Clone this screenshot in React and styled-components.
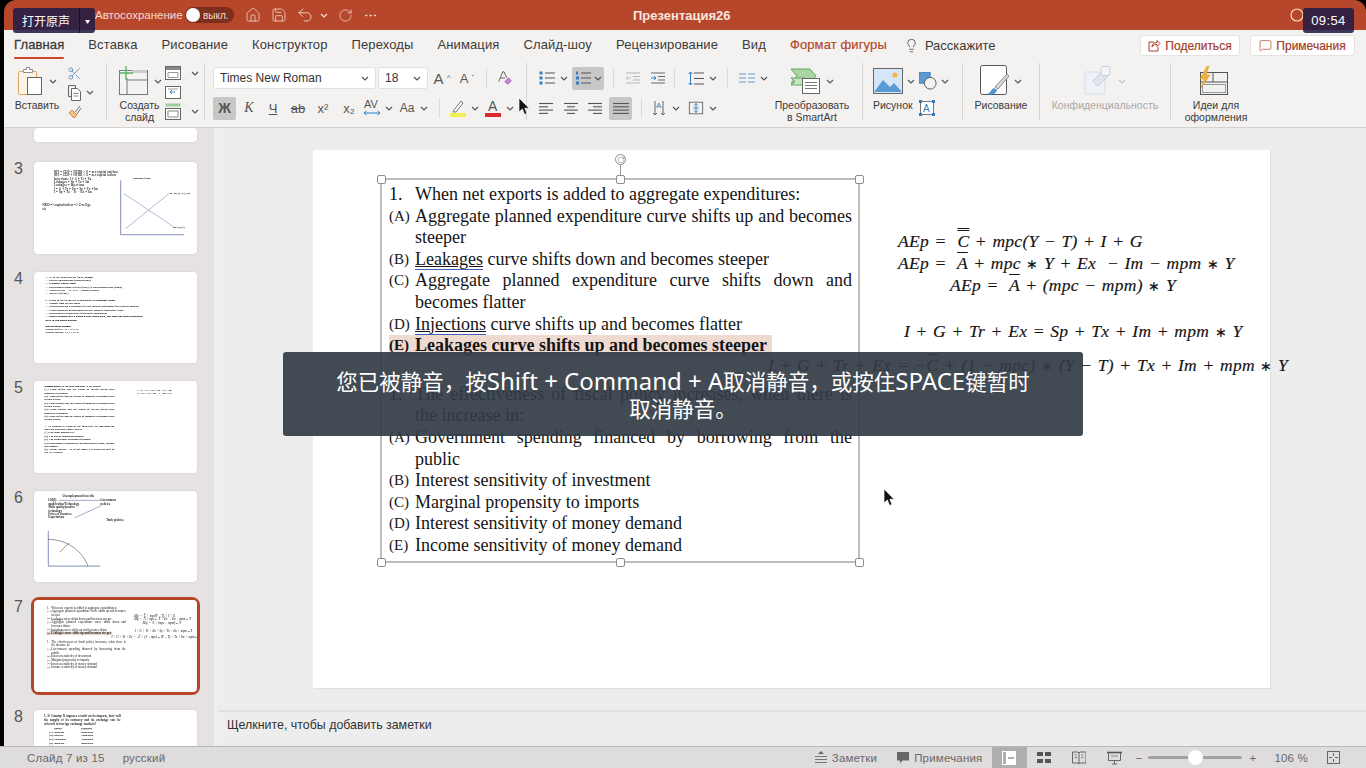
import React from 'react'
import styled, { createGlobalStyle } from 'styled-components'
import { House, Save, Undo2, RotateCw, Ellipsis, Scissors, Lightbulb, MessageSquare } from 'lucide-react'

const GlobalStyle = createGlobalStyle`
  html, body {
    margin: 0;
    padding: 0;
    background: #000;
    overflow: hidden;
  }
  * { box-sizing: border-box; }
`

const SANS = `"Liberation Sans", Arial, sans-serif`
const SERIF = `"Liberation Serif", "Times New Roman", serif`

const Page = styled.div`
  position: relative;
  width: 1366px;
  height: 768px;
  overflow: hidden;
  background: #000;
  font-family: ${SANS};
  display: flex;
  flex-direction: column;
`

const Window = styled.div`
  margin-left: 4px;
  flex: 1;
  min-height: 0;
  display: flex;
  flex-direction: column;
`

/* title bar */
const TitleBar = styled.div`
  height: 30px;
  flex: none;
  background: #b7472a;
  border-radius: 12px 12px 0 0;
  display: grid;
  grid-template-columns: 538px auto 1fr;
  align-items: center;
  padding-left: 91px;
  color: #fff;
`

const QuickBar = styled.div`
  display: flex;
  align-items: center;
`

const AutoSave = styled.span`
  font-size: 11.5px;
  color: #f3dcd4;
  width: 90px;
`

const Toggle = styled.div`
  width: 49px;
  height: 16px;
  border-radius: 8px;
  background: #7c2f1c;
  display: flex;
  align-items: center;
  gap: 3px;
  font-size: 10px;
  color: #f3dcd4;
  padding-left: 1px;
  margin-right: 6px;
  &::before {
    content: '';
    width: 14px;
    height: 14px;
    border-radius: 50%;
    background: #fff;
  }
`

const QuickIcon = styled.span`
  display: inline-flex;
  width: ${p => p.$w || 26}px;
  justify-content: center;
  color: #f6e3dc;
`

const DocTitle = styled.div`
  font-size: 13px;
  font-weight: 700;
  color: #f7e6e0;
`

const TitleRight = styled.div`
  display: flex;
  justify-content: flex-end;
  padding-right: 62px;
`

/* tabs */
const TabRow = styled.div`
  height: 30px;
  flex: none;
  background: #f4f2f1;
  display: flex;
  align-items: center;
  padding: 0 11px 0 10px;
  gap: 24px;
`

const Tab = styled.div`
  position: relative;
  font-size: 13px;
  letter-spacing: 0.12px;
  line-height: 28px;
  color: ${p => (p.$accent ? '#b7472a' : '#3c3a39')};
  ${p => p.$accent && '-webkit-text-stroke: 0.2px #b7472a;'}
  ${p => p.$active && `
    -webkit-text-stroke: 0.3px #3c3a39;
    &::after {
      content: '';
      position: absolute;
      left: 0;
      right: 0;
      bottom: 0;
      height: 2px;
      border-radius: 1px;
      background: #c8492a;
    }
  `}
`

const TellMe = styled.div`
  display: flex;
  align-items: center;
  gap: 6px;
  margin-left: -7px;
  font-size: 13px;
  color: #3c3a39;
`

const HeaderButtons = styled.div`
  margin-left: auto;
  display: flex;
  gap: 10px;
  margin-top: 1px;
`

const HeaderButton = styled.div`
  width: ${p => p.$w}px;
  height: 21px;
  background: #fff;
  border: 1px solid #e5e2e1;
  border-radius: 3px;
  display: flex;
  align-items: center;
  justify-content: center;
  gap: 4px;
  font-size: 12px;
  color: #a63c26;
  -webkit-text-stroke: 0.2px #a63c26;
`

/* ribbon */
const Ribbon = styled.div`
  height: 68px;
  flex: none;
  background: #f4f2f1;
  border-bottom: 1px solid #d4d2d1;
  padding: 3px 0 7px 10px;
  display: flex;
  color: #444;
`

const Group = styled.div`
  width: ${p => p.$w}px;
  flex: none;
  padding-left: ${p => p.$pl || 0}px;
  display: flex;
`

const GroupSep = styled.div`
  width: 1px;
  flex: none;
  background: #d6d4d3;
`

const Rows = styled.div`
  display: flex;
  flex-direction: column;
  width: ${p => (p.$w ? `${p.$w}px` : 'auto')};
`

const ToolRow = styled.div`
  height: 30px;
  flex: none;
  display: flex;
  align-items: center;
`

const Tool = styled.div`
  width: ${p => p.$w || 16}px;
  height: ${p => (p.$active ? 23 : 20)}px;
  flex: none;
  display: flex;
  align-items: center;
  justify-content: center;
  gap: 3px;
  border-radius: 2px;
  background: ${p => (p.$active ? '#c9c7c6' : 'transparent')};
  font-size: ${p => p.$fs || 13}px;
  font-weight: ${p => p.$bold || 400};
  font-style: ${p => (p.$italic ? 'italic' : 'normal')};
  text-decoration: ${p => p.$deco || 'none'};
  font-family: ${p => (p.$serif ? SERIF : SANS)};
  color: #555;
`

const Caret = styled.sup`
  font-size: 8px;
  line-height: 0;
`

const Gap = styled.div`
  width: ${p => p.$w}px;
  flex: none;
`

const MiniSep = styled.div`
  width: 1px;
  height: 20px;
  flex: none;
  background: #dcdad9;
`

const Select = styled.div`
  width: ${p => p.$w}px;
  height: 22px;
  flex: none;
  background: #fff;
  border: 1px solid #e1dfde;
  border-radius: 3px;
  padding: 0 6px;
  display: flex;
  align-items: center;
  justify-content: space-between;
  font-size: 12px;
  color: #333;
`

const BigTool = styled.div`
  width: ${p => p.$w}px;
  flex: none;
  display: flex;
  flex-direction: column;
  align-items: center;
`

const BigIcon = styled.div`
  height: 36px;
  flex: none;
  display: flex;
  align-items: center;
  gap: 4px;
`

const ToolLabel = styled.div`
  font-size: 10.5px;
  line-height: 12px;
  text-align: center;
  color: ${p => (p.$disabled ? '#a9a8a7' : '#3a3a3a')};
  white-space: nowrap;
`

const SmallColumn = styled.div`
  display: flex;
  flex: none;
  flex-direction: column;
  align-items: flex-start;
  justify-content: space-between;
  height: 57px;
  padding-top: 3px;
`

const SmallTool = styled.div`
  display: flex;
  align-items: center;
  gap: 4px;
`

const PictureLabelRow = styled.div`
  display: flex;
  align-items: flex-start;
  gap: 6px;
  & > svg {
    margin-top: 1px;
  }
`

/* main */
const Main = styled.div`
  flex: 1;
  min-height: 0;
  display: flex;
`

const Sidebar = styled.div`
  width: 214px;
  flex: none;
  background: #e6e2e2;
  border-right: 4px solid #f0eeee;
  overflow: hidden;
  display: flex;
  flex-direction: column;
  gap: 18px;
`

const ThumbRow = styled.div`
  display: flex;
  flex: none;
  height: ${p => (p.$clip ? '14px' : 'auto')};
  margin-bottom: ${p => (p.$clip ? '2px' : '0')};
`

const ThumbNum = styled.div`
  width: 30px;
  flex: none;
  padding: 0 0 0 10px;
  font-size: 16px;
  line-height: 13px;
  color: #555;
`

const ThumbCard = styled.div`
  position: relative;
  width: 163px;
  height: ${p => (p.$clip ? '14px' : '91.5px')};
  background: #fff;
  border-radius: 4px;
  overflow: hidden;
  flex: none;
  box-shadow: 0 0 2px rgba(0, 0, 0, 0.12);
`

const ThumbFrame = styled.div`
  position: relative;
  border-radius: 5px;
  ${p => p.$selected && 'outline: 3px solid #b7472a; outline-offset: 0;'}
`

const ThumbScale = styled.div`
  position: absolute;
  left: 0;
  top: 0;
  width: 957px;
  height: 538px;
  transform: scale(0.1703);
  transform-origin: 0 0;
  filter: blur(1.3px);
`

const ThumbText = styled.div`
  position: absolute;
  left: ${p => p.$x}px;
  top: ${p => p.$y}px;
  width: ${p => (p.$w ? `${p.$w}px` : 'auto')};
  font-family: ${SERIF};
  font-size: ${p => p.$fs || 17}px;
  line-height: ${p => p.$lh || 19}px;
  letter-spacing: ${p => p.$ls || 0}px;
  color: #000;
  -webkit-text-stroke: 0.3px #000;
  white-space: ${p => (p.$w ? 'normal' : 'nowrap')};
  text-align: ${p => (p.$w ? 'justify' : 'left')};
`

const ThumbChart = styled.svg`
  position: absolute;
  left: 0;
  top: 0;
`

const Workspace = styled.div`
  flex: 1;
  min-width: 0;
  display: flex;
  flex-direction: column;
  background: #eeeded;
`

const SlideArea = styled.div`
  flex: 1;
  min-height: 0;
  padding: 22px 0 0 95px;
`

const SlideSheet = styled.div`
  position: relative;
  width: 957px;
  height: 538px;
  background: #fff;
  box-shadow: 1px 1px 1px rgba(0, 0, 0, 0.06);
`

const QuestionBox = styled.div`
  position: absolute;
  left: 68px;
  top: 29px;
  width: 478px;
  height: 383px;
  padding: 5px 7px 0 8px;
  font-family: ${SERIF};
  font-size: 18px;
  line-height: 21.6px;
  color: #141414;
  ${p => p.$selected && 'outline: 2px solid #bdbdbd; outline-offset: -1px;'}
`

const Item = styled.div`
  display: grid;
  grid-template-columns: 26px 1fr;
  text-align: justify;
  margin-top: ${p => p.$mt || 0}px;
  ${p => p.$marked && `
    font-weight: 700;
    width: fit-content;
    background: #efdad2;
    padding-right: 5px;
    text-align: left;
  `}
`

const Marker = styled.span`
  font-size: ${p => (p.$num ? 18 : 15)}px;
`

const Flagged = styled.span`
  text-decoration: underline;
  border-bottom: 1px solid #3f5fb5;
`

const Handle = styled.div`
  position: absolute;
  left: ${p => p.$x}%;
  top: ${p => p.$y}%;
  width: 9px;
  height: 9px;
  margin: -4px 0 0 -4px;
  background: #fff;
  border: 1px solid #8d8d8d;
  border-radius: 2px;
`

const RotateHandle = styled.div`
  position: absolute;
  left: 50%;
  top: -25px;
  width: 11px;
  height: 11px;
  margin-left: -5px;
  border: 1px solid #8d8d8d;
  border-radius: 50%;
  background: #fff;
  display: flex;
  align-items: center;
  justify-content: center;
  color: #777;
  &::after {
    content: '';
    position: absolute;
    left: 4px;
    top: 10px;
    width: 1px;
    height: 15px;
    background: #9a9a9a;
  }
`

const Formula = styled.div`
  position: absolute;
  left: ${p => p.$x}px;
  top: ${p => p.$y}px;
  font-family: ${SERIF};
  font-style: italic;
  font-size: 17.5px;
  line-height: 22px;
  word-spacing: 0.8px;
  letter-spacing: 0.28px;
  color: #141414;
  -webkit-text-stroke: 0.15px #141414;
  white-space: pre;
`

const Over = styled.span`
  text-decoration: overline ${p => (p.$double ? 'double' : 'solid')};
  text-decoration-thickness: 1px;
`

const Star = styled.span`
  font-family: "Liberation Sans", sans-serif;
  font-style: normal;
  font-size: 14px;
`

const NotesPane = styled.div`
  height: 36px;
  flex: none;
  border-top: 2px solid #e2e0e0;
  padding: 0 0 8px 9px;
  display: flex;
  align-items: center;
  font-size: 12.4px;
  color: #333;
`

/* status bar */
const StatusBar = styled.div`
  height: 22px;
  flex: none;
  background: #dedcdc;
  border-top: 1px solid #b8b6b6;
  display: flex;
  align-items: center;
  padding-left: 27px;
  font-size: 11.5px;
  letter-spacing: 0.2px;
  color: #6a6868;
`

const StatusRight = styled.div`
  margin-left: auto;
  display: flex;
  align-items: center;
  height: 100%;
  padding-right: 26px;
`

const StatusItem = styled.div`
  display: flex;
  align-items: center;
  gap: 5px;
  margin-right: ${p => p.$mr || 0}px;
`

const ViewButton = styled.div`
  width: 35px;
  height: 100%;
  display: flex;
  align-items: center;
  justify-content: center;
  background: ${p => (p.$active ? '#b0aeae' : 'transparent')};
`

const ZoomTrack = styled.div`
  position: relative;
  width: 94px;
  height: 3px;
  margin: 0 7px 0 6px;
  background: #a3a1a1;
  border-radius: 2px;
`

const ZoomThumb = styled.div`
  position: absolute;
  left: 40px;
  top: -6px;
  width: 15px;
  height: 15px;
  border-radius: 50%;
  background: #fff;
`

/* things lying over the recording */
const CaptionButton = styled.div`
  position: absolute;
  left: 13px;
  top: 8px;
  width: 82px;
  height: 25px;
  border-radius: 3px;
  background: rgba(35, 30, 70, 0.88);
  color: #fff;
  display: grid;
  grid-template-columns: 66px 1fr;
  align-items: center;
  text-align: center;
  font-family: "Noto Sans CJK SC", sans-serif;
  font-size: 12px;
`

const CaptionArrow = styled.span`
  height: 100%;
  border-left: 1px solid #15131f;
  display: flex;
  align-items: center;
  justify-content: center;
  font-size: 5px;
`

const TimeBadge = styled.div`
  position: absolute;
  left: 1303px;
  top: 8px;
  width: 51px;
  height: 25px;
  border-radius: 3px;
  background: rgba(35, 30, 70, 0.88);
  color: #fff;
  display: flex;
  align-items: center;
  justify-content: center;
  font-size: 13px;
  letter-spacing: 0.4px;
`

const MuteBanner = styled.div`
  position: absolute;
  left: 283px;
  top: 352px;
  width: 800px;
  height: 84px;
  padding: 0 48px;
  border-radius: 3px;
  background: rgba(50, 59, 69, 0.92);
  color: #fff;
  text-align: center;
  display: flex;
  align-items: center;
  font-family: "Noto Sans CJK SC", sans-serif;
  font-size: 21.5px;
  line-height: 27px;
`

const BannerLatin = styled.span`
  font-family: "Noto Sans", sans-serif;
  font-size: 24px;
  line-height: 20px;
`

const CursorMark = styled.svg`
  position: absolute;
  left: ${p => p.$x}px;
  top: ${p => p.$y}px;
`

const Chev = ({ c = '#555' }) => (
  <svg width="8" height="5" viewBox="0 0 8 5" fill="none">
    <path d="M1 1l3 3 3-3" stroke={c} strokeWidth="1.2" />
  </svg>
)

const Cursor = ({ x, y }) => (
  <CursorMark $x={x} $y={y} width="12" height="19" viewBox="0 0 12 19">
    <path d="M1 1v14l3.4-3 2.2 5.4 2.4-1-2.2-5.2h4.4z" fill="#111" stroke="#fff" strokeWidth="0.7" />
  </CursorMark>
)

const PasteIcon = () => (
  <svg width="28" height="30" viewBox="0 0 28 30" fill="none">
    <rect x="1.5" y="5.5" width="18" height="23" rx="1" fill="#fbf3e8" stroke="#dda45c" />
    <path d="M6.5 5.5V3.5h3V1.5h3v2h3v3h-9z" fill="#fff" stroke="#8d8d8d" />
    <rect x="10.5" y="11.5" width="14" height="17" fill="#fff" stroke="#666" />
  </svg>
)

const CopyIcon = () => (
  <svg width="15" height="18" viewBox="0 0 15 18" fill="none">
    <path d="M1.5 1.5h7v3M1.5 1.5v11h3" stroke="#666" />
    <path d="M4.5 4.5h6l3 3v9h-9z" fill="#fff" stroke="#666" />
    <path d="M6.5 9.5h5M6.5 12h5" stroke="#888" />
  </svg>
)

const BrushIcon = () => (
  <svg width="16" height="16" viewBox="0 0 16 16" fill="none">
    <path d="M2 9l5 5 3-3-5-5z" fill="#f3c48c" stroke="#d9803a" />
    <path d="M8 8l5-6M10 10l4-6" stroke="#777" />
  </svg>
)

const NewSlideIcon = () => (
  <svg width="32" height="30" viewBox="0 0 32 30" fill="none">
    <rect x="1.5" y="4.5" width="28" height="24" fill="#f3f3f2" stroke="#777" />
    <path d="M9 12v16M9 14h20" stroke="#777" />
    <rect x="14" y="4" width="15" height="3" fill="#ccc" />
    <path d="M8 0v14M1 7h14" stroke="#5cb36a" strokeWidth="1.4" />
  </svg>
)

const LayoutIcon = ({ bar = '#888' }) => (
  <svg width="16" height="14" viewBox="0 0 16 14" fill="none">
    <rect x="0.5" y="0.5" width="15" height="13" fill="#fff" stroke="#666" />
    <rect x="1" y="1" width="14" height="3" fill={bar} />
    <path d="M3 6.5h10v5H3z" stroke="#999" />
  </svg>
)

const ResetIcon = () => (
  <svg width="16" height="15" viewBox="0 0 16 15" fill="none">
    <rect x="0.5" y="2.5" width="15" height="12" fill="#fff" stroke="#666" />
    <path d="M10 8H5l2-2M5 8l2 2" stroke="#3f8bc9" />
    <path d="M3 5h10" stroke="#999" />
  </svg>
)

const SectionIcon = () => (
  <svg width="16" height="17" viewBox="0 0 16 17" fill="none">
    <rect x="0.5" y="0.5" width="15" height="3" fill="#9ccf9f" />
    <rect x="0.5" y="5.5" width="15" height="11" fill="#fff" stroke="#666" />
    <rect x="3" y="8" width="10" height="6" stroke="#888" />
  </svg>
)

const ClearFormatIcon = () => (
  <svg width="18" height="18" viewBox="0 0 18 18" fill="none">
    <path d="M2 13L6.5 2h1.4L11 9M4 9h5" stroke="#555" />
    <path d="M9 13l4-4 3 3-4 4z" fill="#c58ad6" stroke="#9a4fb0" />
  </svg>
)

const KerningIcon = () => (
  <svg width="20" height="20" viewBox="0 0 20 20" fill="none">
    <text x="2" y="10" fontSize="11" fill="#555" fontFamily="Liberation Sans">AV</text>
    <path d="M2 15h16M4.500 13l-2.500 2 2.500 2M15.500 13l2.500 2-2.500 2" stroke="#2f7cc4" />
  </svg>
)

const ListIcon = ({ numbered }) => (
  <svg width="16" height="14" viewBox="0 0 16 14" fill="none">
    <path d="M6 2h10M6 7h10M6 12h10" stroke="#555" strokeWidth="1.1" />
    {numbered ? (
      <g fill="#2f7cc4">
        <rect x="1" y="0.5" width="2" height="3" />
        <rect x="1" y="5.5" width="3" height="3" />
        <rect x="1" y="10.5" width="3" height="3" />
      </g>
    ) : (
      <g fill="#2f7cc4">
        <rect x="0.5" y="0.5" width="3" height="3" />
        <rect x="0.5" y="5.5" width="3" height="3" />
        <rect x="0.5" y="10.5" width="3" height="3" />
      </g>
    )}
  </svg>
)

const IndentIcon = ({ dim }) => (
  <svg width="14" height="12" viewBox="0 0 14 12" fill="none">
    <path d="M0 1h14M7 4.5h7M7 8h7M0 11h14" stroke={dim ? '#b5b5b5' : '#666'} />
    <path d={dim ? 'M5 6H0m2-2L0 6l2 2' : 'M0 6h5M3 4l2 2-2 2'} stroke={dim ? '#a8c8e4' : '#2f7cc4'} />
  </svg>
)

const LineSpacingIcon = () => (
  <svg width="16" height="15" viewBox="0 0 16 15" fill="none">
    <path d="M6 2h10M6 7.5h10M6 13h10" stroke="#555" />
    <path d="M2.5 1v13M0.5 3l2-2 2 2M0.5 12l2 2 2-2" stroke="#2f7cc4" />
  </svg>
)

const ColumnsIcon = () => (
  <svg width="16" height="10" viewBox="0 0 16 10" fill="none">
    <path d="M0 1h7M0 5h7M0 9h7M9 1h7M9 5h7M9 9h7" stroke="#5b9bd5" strokeWidth="1.2" />
  </svg>
)

const AlignIcon = ({ mode }) => {
  const rows = {
    left: [[0, 14], [0, 9], [0, 14], [0, 9]],
    center: [[0, 14], [3, 11], [0, 14], [3, 11]],
    right: [[0, 14], [5, 14], [0, 14], [5, 14]],
    justify: [[0, 16], [0, 16], [0, 16], [0, 16]],
  }[mode]
  return (
    <svg width="16" height="13" viewBox="0 0 16 13" fill="none">
      {rows.map((r, i) => (
        <path key={i} d={`M${r[0]} ${1.5 + i * 3.3}H${r[1]}`} stroke="#555" strokeWidth="1.1" />
      ))}
    </svg>
  )
}

const TextDirIcon = () => (
  <svg width="14" height="18" viewBox="0 0 14 18" fill="none">
    <path d="M3 2v14M1 14l2 2 2-2M11 2v14M9 14l2 2 2-2" stroke="#666" />
    <text x="4" y="9" fontSize="8" fill="#2f7cc4" fontFamily="Liberation Sans">A</text>
  </svg>
)

const TextAlignIcon = () => (
  <svg width="18" height="16" viewBox="0 0 18 16" fill="none">
    <rect x="1.5" y="1.5" width="15" height="13" stroke="#666" />
    <path d="M9 3v10M7 5l2-2 2 2M7 11l2 2 2-2M6 8h6" stroke="#2f7cc4" />
  </svg>
)

const SmartArtIcon = () => (
  <svg width="32" height="28" viewBox="0 0 32 28" fill="none">
    <path d="M1 2h19l6 7-6 7H1l6-7z" fill="#a9d5a5" stroke="#5fa85c" />
    <path d="M1 11h14v7H1l4-3.500z" fill="#c6e4c2" stroke="#5fa85c" />
    <rect x="12.5" y="11.5" width="17" height="15" fill="#fff" stroke="#666" />
    <path d="M15 15.500h12M15 18.500h12M15 21.500h12" stroke="#777" />
  </svg>
)

const PictureIcon = () => (
  <svg width="30" height="26" viewBox="0 0 30 26" fill="none">
    <rect x="0.5" y="0.5" width="29" height="25" fill="#d5e7f6" stroke="#666" />
    <path d="M1 24l9-12 7 7 4-4 8 9z" fill="#5b9bd5" />
    <circle cx="22" cy="7" r="2.6" fill="#f2b84b" />
  </svg>
)

const ShapesIcon = () => (
  <svg width="18" height="18" viewBox="0 0 20 20" fill="none">
    <rect x="0.5" y="0.5" width="12" height="12" fill="#5b9bd5" stroke="#4a86c0" />
    <circle cx="12.5" cy="12.5" r="6.5" fill="#f4f2f1" stroke="#555" />
  </svg>
)

const TextBoxIcon = () => (
  <svg width="16" height="16" viewBox="0 0 16 16" fill="none">
    <rect x="1.5" y="1.5" width="13" height="13" fill="#fff" stroke="#777" />
    <text x="4" y="12" fontSize="10" fill="#2f7cc4" fontFamily="Liberation Sans">A</text>
    <g fill="#2f7cc4">
      <rect x="0" y="0" width="3" height="3" />
      <rect x="13" y="0" width="3" height="3" />
      <rect x="0" y="13" width="3" height="3" />
      <rect x="13" y="13" width="3" height="3" />
    </g>
  </svg>
)

const DrawingIcon = () => (
  <svg width="30" height="32" viewBox="0 0 30 32" fill="none">
    <rect x="0.5" y="0.5" width="26" height="29" rx="2" fill="#fff" stroke="#555" />
    <path d="M27 9L15 22l3 2L29 11z" fill="#d9d9d9" stroke="#888" />
    <path d="M14 23c-3 1-3 5-7 6 5 2 10-1 10-4z" fill="#4f93d2" />
  </svg>
)

const PrivacyIcon = () => (
  <svg width="30" height="30" viewBox="0 0 30 30" fill="none">
    <path d="M1 6h14l6 6v16H1z" fill="#eef2f7" stroke="#d5dde6" />
    <path d="M9 15l10-10 5 5-10 10z" fill="#dfe5ec" stroke="#c5ced8" />
    <rect x="17" y="0.5" width="9" height="9" rx="2" fill="#f2f4f7" stroke="#c5ced8" />
  </svg>
)

const IdeasIcon = () => (
  <svg width="38" height="30" viewBox="0 0 38 30" fill="none">
    <rect x="3.5" y="6.5" width="27" height="22" fill="#f4f2f1" stroke="#555" />
    <path d="M16 7v9M4 16h26" stroke="#555" />
    <rect x="5.5" y="18.5" width="23" height="8" stroke="#999" />
    <path d="M10 0L3 13h4L4 22 13 9H9l3-9z" fill="#f2b33d" stroke="#d6932a" strokeWidth="0.5" />
  </svg>
)

const ShareIcon = () => (
  <svg width="13" height="13" viewBox="0 0 13 13" fill="none">
    <path d="M6 3H1v9h9V8" stroke="#a63c26" />
    <path d="M4 8c0-3 2-4.500 5-4.500V1.500l3 3-3 3V5.500C7 5.500 5 6 4 8z" stroke="#a63c26" />
  </svg>
)

const NotesIcon = () => (
  <svg width="12" height="13" viewBox="0 0 12 13" fill="none">
    <path d="M3 3l3-3 3 3z" fill="#666" />
    <path d="M0 5.500h12M0 8.500h12M0 11.500h12" stroke="#777" />
  </svg>
)

const CommentIcon = () => (
  <svg width="12" height="12" viewBox="0 0 12 12">
    <path d="M0 0h12v8.500H5.500L3 11.500v-3H0z" fill="#666" />
  </svg>
)

const NormalViewIcon = () => (
  <svg width="14" height="14" viewBox="0 0 14 14">
    <rect width="14" height="14" fill="#fff" />
    <rect x="1" y="1" width="3" height="12" fill="#b0aeae" />
    <rect x="6" y="6" width="6" height="2" fill="#b0aeae" />
  </svg>
)

const GridViewIcon = () => (
  <svg width="14" height="11" viewBox="0 0 14 11" fill="#555">
    <rect width="6" height="4" />
    <rect x="8" width="6" height="4" />
    <rect y="7" width="6" height="4" />
    <rect x="8" y="7" width="6" height="4" />
  </svg>
)

const ReadViewIcon = () => (
  <svg width="14" height="13" viewBox="0 0 14 13" fill="none">
    <path d="M0.500 1h5.500l1 1 1-1h6v11H8l-1 1-1-1H0.500zM7 2v10" stroke="#666" />
    <path d="M2.500 4h2.500M2.500 6.500h2.500M9 4h2.500M9 6.500h2.500" stroke="#888" />
  </svg>
)

const ShowIcon = () => (
  <svg width="15" height="14" viewBox="0 0 15 14" fill="none">
    <path d="M0 1.500h15" stroke="#555" strokeWidth="1.6" />
    <path d="M1.500 2v7.500h12V2M7.500 9.500V13M5 13h5" stroke="#666" />
    <path d="M4 5h7" stroke="#888" />
  </svg>
)

const FitIcon = () => (
  <svg width="13" height="13" viewBox="0 0 13 13" fill="none">
    <rect x="0.500" y="0.500" width="12" height="12" stroke="#666" />
    <path d="M6.500 2v3M6.500 8v3M2 6.500h3M8 6.500h3" stroke="#666" />
  </svg>
)

const AccentA = ({ color }) => (
  <svg width="18" height="19" viewBox="0 0 18 19" fill="none">
    <text x="4" y="12" fontSize="14" fill="#555" fontFamily="Liberation Sans">A</text>
    <rect x="1" y="14" width="16" height="4" fill={color} />
  </svg>
)

const HighlightIcon = () => (
  <svg width="18" height="19" viewBox="0 0 18 19" fill="none">
    <path d="M5 11l7-9 2 2-7 9-3 0z" fill="#fff" stroke="#777" />
    <rect x="1" y="14" width="16" height="4" fill="#f4ee4e" />
  </svg>
)

const MainSlide = ({ selected }) => (
  <>
    <QuestionBox $selected={selected}>
      <Item><Marker $num>1.</Marker><span>When net exports is added to aggregate expenditures:</span></Item>
      <Item><Marker>(A)</Marker><span>Aggregate planned expenditure curve shifts up and becomes steeper</span></Item>
      <Item><Marker>(B)</Marker><span><Flagged>Leakages</Flagged> curve shifts down and becomes steeper</span></Item>
      <Item><Marker>(C)</Marker><span>Aggregate planned expenditure curve shifts down and becomes flatter</span></Item>
      <Item><Marker>(D)</Marker><span><Flagged>Injections</Flagged> curve shifts up and becomes flatter</span></Item>
      <Item $marked><Marker>(E)</Marker><span>Leakages curve shifts up and becomes steeper</span></Item>
      <Item $mt={27}><Marker $num>1.</Marker><span>The effectiveness of fiscal policy increases, when there is the increase in:</span></Item>
      <Item><Marker>(A)</Marker><span>Government spending financed by borrowing from the public</span></Item>
      <Item><Marker>(B)</Marker><span>Interest sensitivity of investment</span></Item>
      <Item><Marker>(C)</Marker><span>Marginal propensity to imports</span></Item>
      <Item><Marker>(D)</Marker><span>Interest sensitivity of money demand</span></Item>
      <Item><Marker>(E)</Marker><span>Income sensitivity of money demand</span></Item>
      {selected && (
        <>
          <RotateHandle><RotateCw size={8} strokeWidth={1.5} /></RotateHandle>
          {[[0, 0], [50, 0], [100, 0], [0, 100], [50, 100], [100, 100]].map(([x, y]) => (
            <Handle key={`${x}-${y}`} $x={x} $y={y} />
          ))}
        </>
      )}
    </QuestionBox>
    <Formula $x={585} $y={80}>{'AEp =  '}<Over $double>C</Over>{' + mpc(Y − T) + I + G'}</Formula>
    <Formula $x={585} $y={102}>{'AEp =  '}<Over>A</Over>{' + mpc '}<Star>∗</Star>{' Y + Ex  − Im − mpm '}<Star>∗</Star>{' Y'}</Formula>
    <Formula $x={637} $y={124}>{'AEp =  '}<Over>A</Over>{' + (mpc − mpm) '}<Star>∗</Star>{' Y'}</Formula>
    <Formula $x={591} $y={170}>{'I + G + Tr + Ex = Sp + Tx + Im + mpm '}<Star>∗</Star>{' Y'}</Formula>
    <Formula $x={455} $y={204}>{'I + G + Tr + Ex = −'}<Over>C</Over>{' + (1 − mpc) '}<Star>∗</Star>{' (Y − T) + Tx + Im + mpm '}<Star>∗</Star>{' Y'}</Formula>
  </>
)

const Thumb3 = () => (
  <>
    <ThumbText $x={117} $y={50} $fs={18} $lh={19.6} $ls={1}>
      NFI = CDF + NFIDI &gt; 0 = net capital outflow<br />
      NFI = CDF + NFIDI &lt; 0 = net capital inflow<br />
      Injections: I + G + Tr + Ex<br />
      Leakages = Sp + Tx + Im<br />
      Leakages = Injections<br />
      I + G + Tr + Ex = Sp + Tx + Im<br />
      I = Sp + Tx − Tr − Ex + Im
    </ThumbText>
    <ThumbText $x={50} $y={245} $fs={18} $ls={0.6}>NKO =&gt; capital inflow =&gt; G-sell gs<br />ok</ThumbText>
    <ThumbText $x={580} $y={85}>Loanable funds</ThumbText>
    <ThumbText $x={795} $y={172}>Ss: Sp, (T-G), Net</ThumbText>
    <ThumbText $x={815} $y={372}>Dd: (r,k,f)</ThumbText>
    <ThumbChart width="957" height="538" viewBox="0 0 957 538" fill="none">
      <path d="M509 108v319h372" stroke="#4a5aa0" strokeWidth="4" />
      <path d="M528 186L822 382M538 391L792 186" stroke="#6c76b5" strokeWidth="3" />
    </ThumbChart>
  </>
)

const Thumb4 = () => (
  <ThumbText $x={68} $y={20} $fs={16.5} $lh={19.2} $ls={0.3}>
    1. All of the following are flows, <b>except</b><br />
    — Capital consumption (depreciation)<br />
    <b>— National wealth stock</b><br />
    — Government budget deficit (flow) vs Government debt (stock)<br />
    — Public saving = Tx-Tr-G = Budget surplus<br />
    — Real GDP(flow)<br />
    <br />
    2. Which of the following is considered an <b>imputed value?</b><br />
    — Income from selling shoes<br />
    — Expenditures on a purchase of a pre-medical equipment for a public hospital<br />
    — Firm's spending on equipment or raw material from other firms<br />
    — Government expenditures for student scholarship<br />
    <b>— Rental income that a house owner could earn, but does not receive because</b><br />
    <b>he is in the house himself</b><br />
    <br />
    <b>Government budget:</b><br />
    Budget deficit : G + Tr − Tx<br />
    Budget surplus: Tx − Tr − G
  </ThumbText>
)

const Thumb5 = () => (
  <>
    <ThumbText $x={62} $y={20} $w={410} $fs={16.5} $lh={19.5}>
      <b>Budget deficit</b> in the open economy is the sum of<br />
      (A) Trade deficit and the excess of private saving over domestic investment<br />
      (B) Trade deficit and the excess of domestic investment over private saving<br />
      (C) Trade surplus and the excess of domestic investment over private saving<br />
      (D) Trade surplus and the excess of private saving over domestic investment<br />
      (E) Trade deficit and the excess of domestic investment over private saving<br />
      <br />
      1. An increase in which of the following will <b>not shift</b> the long-run aggregate supply curve?<br />
      (A) The labor productivity<br />
      (B) The size of production capacity<br />
      (C) The educational attainment of people<br />
      (D) Government expenditures on constructing roads, bridges and schools<br />
      (E) No/any answer - all of the above will cause the shift of the LRAS curve
    </ThumbText>
    <ThumbText $x={605} $y={44} $fs={16} $lh={18}>
      I + G + Tr + Ex = Sp + Tx + Im<br />
      X + Tr − Tx = Sp − I + Im − Ex
    </ThumbText>
  </>
)

const Thumb6 = () => (
  <>
    <ThumbText $x={168} $y={22} $fs={19}>Unemployment benefits</ThumbText>
    <ThumbText $x={84} $y={45} $fs={18} $lh={20}>
      LM(I):<br />
      qualification/Technology<br />
      Skills quality/positive<br />
      technology<br />
      Prices of resources<br />
      Expectations
    </ThumbText>
    <ThumbText $x={391} $y={45} $fs={18} $lh={20}>Government<br />policies</ThumbText>
    <ThumbText $x={424} $y={162} $fs={18}>Trade policies</ThumbText>
    <ThumbChart width="957" height="538" viewBox="0 0 957 538" fill="none">
      <path d="M147 55H391M239 157L391 88" stroke="#4a5aa0" strokeWidth="3" />
      <path d="M84 235V441H388" stroke="#4a5aa0" strokeWidth="4" />
      <path d="M84 284C180 284 280 340 317 441M153 358L205 305" stroke="#333" strokeWidth="3" />
    </ThumbChart>
  </>
)

const Thumb8 = () => (
  <>
    <ThumbText $x={59} $y={21} $w={450} $fs={20} $lh={24}>
      1. If Country X imposes a tariff on its imports, how will the supply of its currency and its exchange rate be affected in foreign exchange markets?
    </ThumbText>
    <ThumbText $x={88} $y={96} $fs={17} $lh={21.5}>
      &nbsp;&nbsp;&nbsp;&nbsp;&nbsp;&nbsp;&nbsp;<u>Supply</u><br />
      (A) Decrease<br />(B) Increase<br />(C) No change<br />(D) Decrease<br />(E) Decrease
    </ThumbText>
    <ThumbText $x={274} $y={96} $fs={17} $lh={21.5}>
      <u>Exchange</u><br />
      Depreciate<br />Appreciate<br />Appreciate<br />Depreciate<br />Depreciate
    </ThumbText>
  </>
)

const slides = [
  { n: 3, body: <Thumb3 /> },
  { n: 4, body: <Thumb4 /> },
  { n: 5, body: <Thumb5 /> },
  { n: 6, body: <Thumb6 /> },
  { n: 7, body: <MainSlide />, selected: true },
  { n: 8, body: <Thumb8 /> },
]

const tabs = ['Вставка', 'Рисование', 'Конструктор', 'Переходы', 'Анимация', 'Слайд-шоу', 'Рецензирование', 'Вид']

const App = () => (
  <Page>
    <GlobalStyle />
    <Window>
      <TitleBar>
        <QuickBar>
          <AutoSave>Автосохранение</AutoSave>
          <Toggle>выкл.</Toggle>
          <QuickIcon><House size={16} strokeWidth={1.1} /></QuickIcon>
          <QuickIcon><Save size={16} strokeWidth={1.1} /></QuickIcon>
          <QuickIcon><Undo2 size={18} strokeWidth={1.1} /></QuickIcon>
          <QuickIcon $w={12}><Chev c="#f6e3dc" /></QuickIcon>
          <QuickIcon $w={30}><RotateCw size={15} strokeWidth={1.1} /></QuickIcon>
          <QuickIcon $w={20}><Ellipsis size={15} strokeWidth={1.4} /></QuickIcon>
        </QuickBar>
        <DocTitle>Презентация26</DocTitle>
        <TitleRight>
          <svg width="14" height="14" viewBox="0 0 14 14" fill="none">
            <circle cx="7" cy="7" r="6" stroke="#f7dcc0" strokeWidth="1.2" />
          </svg>
        </TitleRight>
      </TitleBar>

      <TabRow>
        <Tab $active>Главная</Tab>
        {tabs.map(t => <Tab key={t}>{t}</Tab>)}
        <Tab $accent>Формат фигуры</Tab>
        <TellMe>
          <Lightbulb size={15} strokeWidth={1.2} />
          Расскажите
        </TellMe>
        <HeaderButtons>
          <HeaderButton $w={100}><ShareIcon />Поделиться</HeaderButton>
          <HeaderButton $w={105}><MessageSquare size={13} strokeWidth={1.2} />Примечания</HeaderButton>
        </HeaderButtons>
      </TabRow>

      <Ribbon>
        <Group $w={92}>
          <BigTool $w={46}>
            <BigIcon><PasteIcon /><Chev /></BigIcon>
            <ToolLabel>Вставить</ToolLabel>
          </BigTool>
          <Gap $w={7} />
          <SmallColumn>
            <Scissors size={15} strokeWidth={1.1} color="#3b78b5" />
            <SmallTool><CopyIcon /><Chev /></SmallTool>
            <BrushIcon />
          </SmallColumn>
        </Group>
        <GroupSep />
        <Group $w={97} $pl={7}>
          <BigTool $w={51}>
            <BigIcon><NewSlideIcon /><Chev /></BigIcon>
            <ToolLabel>Создать<br />слайд</ToolLabel>
          </BigTool>
          <SmallColumn>
            <SmallTool><LayoutIcon /><Gap $w={2} /><Chev /></SmallTool>
            <ResetIcon />
            <SmallTool><SectionIcon /><Gap $w={2} /><Chev /></SmallTool>
          </SmallColumn>
        </Group>
        <GroupSep />
        <Group $w={321} $pl={8}>
          <Rows>
            <ToolRow>
              <Select $w={163}>Times New Roman<Chev /></Select>
              <Gap $w={2} />
              <Select $w={50}>18<Chev /></Select>
              <Gap $w={5} />
              <Tool $w={18} $fs={15}>A<Caret>^</Caret></Tool>
              <Gap $w={7} />
              <Tool $w={18} $fs={13}>A<Caret>ˇ</Caret></Tool>
              <Gap $w={10} />
              <MiniSep />
              <Gap $w={10} />
              <Tool $w={16}><ClearFormatIcon /></Tool>
            </ToolRow>
            <ToolRow>
              <Tool $w={23} $active $bold={700} $fs={14}>Ж</Tool>
              <Gap $w={5} />
              <Tool $italic $serif $fs={14}>К</Tool>
              <Gap $w={8} />
              <Tool $deco="underline">Ч</Tool>
              <Gap $w={9} />
              <Tool $deco="line-through">ab</Tool>
              <Gap $w={9} />
              <Tool>x²</Tool>
              <Gap $w={10} />
              <Tool>x₂</Tool>
              <Gap $w={5} />
              <Tool $w={20}><KerningIcon /></Tool>
              <Tool $w={14}><Chev /></Tool>
              <Gap $w={1} />
              <Tool $w={20} $fs={12}>Aa</Tool>
              <Tool $w={14}><Chev /></Tool>
              <Gap $w={8} />
              <MiniSep />
              <Gap $w={9} />
              <Tool $w={18}><HighlightIcon /></Tool>
              <Tool $w={16}><Chev /></Tool>
              <Gap $w={1} />
              <Tool $w={18}><AccentA color="#d92b2b" /></Tool>
              <Tool $w={16}><Chev /></Tool>
            </ToolRow>
          </Rows>
        </Group>
        <GroupSep />
        <Group $w={335} $pl={12}>
          <Rows $w={234}>
            <ToolRow>
              <Tool><ListIcon /></Tool>
              <Tool $w={17}><Chev /></Tool>
              <Tool $w={32} $active><ListIcon numbered /><Chev /></Tool>
              <Gap $w={9} />
              <MiniSep />
              <Gap $w={11} />
              <Tool><IndentIcon dim /></Tool>
              <Gap $w={9} />
              <Tool><IndentIcon /></Tool>
              <Gap $w={8} />
              <MiniSep />
              <Gap $w={13} />
              <Tool><LineSpacingIcon /></Tool>
              <Tool $w={18}><Chev /></Tool>
              <Gap $w={5} />
              <MiniSep />
              <Gap $w={11} />
              <Tool><ColumnsIcon /></Tool>
              <Tool $w={18}><Chev /></Tool>
            </ToolRow>
            <ToolRow>
              <Tool><AlignIcon mode="left" /></Tool>
              <Gap $w={9} />
              <Tool><AlignIcon mode="center" /></Tool>
              <Gap $w={8} />
              <Tool><AlignIcon mode="right" /></Tool>
              <Gap $w={5} />
              <Tool $w={23} $active><AlignIcon mode="justify" /></Tool>
              <Gap $w={9} />
              <MiniSep />
              <Gap $w={9} />
              <Tool><TextDirIcon /></Tool>
              <Tool $w={18}><Chev /></Tool>
              <Gap $w={3} />
              <Tool><TextAlignIcon /></Tool>
              <Tool $w={18}><Chev /></Tool>
            </ToolRow>
          </Rows>
          <BigTool $w={78}>
            <BigIcon><SmartArtIcon /><Chev /></BigIcon>
            <ToolLabel>Преобразовать<br />в SmartArt</ToolLabel>
          </BigTool>
        </Group>
        <GroupSep />
        <Group $w={99} $pl={10}>
          <Rows>
            <BigIcon>
              <PictureIcon /><Chev />
              <ShapesIcon /><Chev />
            </BigIcon>
            <PictureLabelRow>
              <ToolLabel>Рисунок</ToolLabel>
              <TextBoxIcon />
            </PictureLabelRow>
          </Rows>
        </Group>
        <GroupSep />
        <Group $w={76}>
          <BigTool $w={76}>
            <BigIcon><DrawingIcon /><Chev /></BigIcon>
            <ToolLabel>Рисование</ToolLabel>
          </BigTool>
        </Group>
        <GroupSep />
        <Group $w={130}>
          <BigTool $w={130}>
            <BigIcon><PrivacyIcon /><Chev c="#c4c3c2" /></BigIcon>
            <ToolLabel $disabled>Конфиденциальность</ToolLabel>
          </BigTool>
        </Group>
        <GroupSep />
        <BigTool $w={90}>
          <BigIcon><IdeasIcon /></BigIcon>
          <ToolLabel>Идеи для<br />оформления</ToolLabel>
        </BigTool>
      </Ribbon>

      <Main>
        <Sidebar>
          <ThumbRow $clip>
            <ThumbNum />
            <ThumbCard $clip />
          </ThumbRow>
          {slides.map(s => (
            <ThumbRow key={s.n}>
              <ThumbNum>{s.n}</ThumbNum>
              <ThumbFrame $selected={s.selected}>
                <ThumbCard>
                  <ThumbScale>{s.body}</ThumbScale>
                </ThumbCard>
              </ThumbFrame>
            </ThumbRow>
          ))}
        </Sidebar>
        <Workspace>
          <SlideArea>
            <SlideSheet>
              <MainSlide selected />
            </SlideSheet>
          </SlideArea>
          <NotesPane>Щелкните, чтобы добавить заметки</NotesPane>
        </Workspace>
      </Main>
    </Window>

    <StatusBar>
      Слайд 7 из 15
      <Gap $w={18} />
      русский
      <StatusRight>
        <StatusItem $mr={20}><NotesIcon />Заметки</StatusItem>
        <StatusItem $mr={9}><CommentIcon />Примечания</StatusItem>
        <ViewButton $active><NormalViewIcon /></ViewButton>
        <ViewButton><GridViewIcon /></ViewButton>
        <ViewButton><ReadViewIcon /></ViewButton>
        <ViewButton><ShowIcon /></ViewButton>
        <Gap $w={4} />
        <span>−</span>
        <ZoomTrack><ZoomThumb /></ZoomTrack>
        <span>+</span>
        <Gap $w={18} />
        <span>106 %</span>
        <Gap $w={19} />
        <FitIcon />
      </StatusRight>
    </StatusBar>

    <CaptionButton>
      <span>打开原声</span>
      <CaptionArrow>▼</CaptionArrow>
    </CaptionButton>
    <TimeBadge>09:54</TimeBadge>
    <MuteBanner>
      <div>
        您已被静音，按<BannerLatin>Shift + Command + A</BannerLatin>取消静音，或按住<BannerLatin>SPACE</BannerLatin>键暂时取消静音。
      </div>
    </MuteBanner>
    <Cursor x={518} y={97} />
    <Cursor x={883} y={488} />
  </Page>
)

export default App
